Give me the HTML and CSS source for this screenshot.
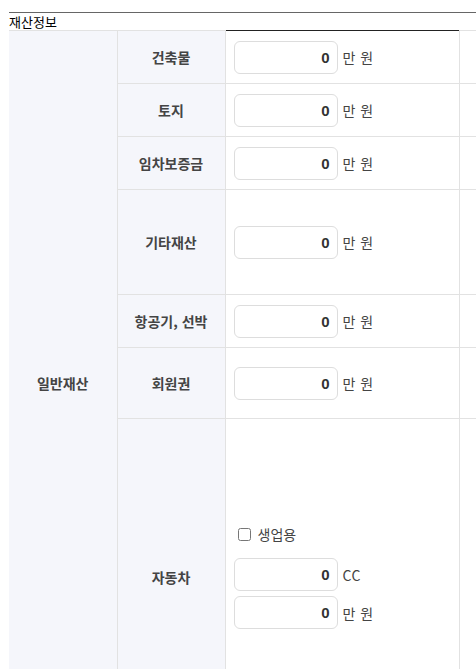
FILE: index.html
```html
<!DOCTYPE html>
<html lang="ko">
<head>
    <meta charset="UTF-8">
    <meta name="viewport" content="width=device-width, initial-scale=1.0">
    <title>재산정보</title>
    <link rel="stylesheet" href="styles.css">
</head>
<body>
    <div class="page">
        <div class="section-title">재산정보</div>
        <table class="asset-table">
            <colgroup>
                <col class="col-group">
                <col class="col-label">
                <col class="col-field">
                <col class="col-extra">
            </colgroup>
            <tbody>
                <tr class="row-base">
                    <th rowspan="7" class="group-head">일반재산</th>
                    <th>건축물</th>
                    <td class="field first">
                        <div class="amount"><input type="text" value="0"><span class="unit">만 원</span></div>
                    </td>
                    <td class="extra first"></td>
                </tr>
                <tr class="row-base">
                    <th>토지</th>
                    <td class="field">
                        <div class="amount"><input type="text" value="0"><span class="unit">만 원</span></div>
                    </td>
                    <td class="extra"></td>
                </tr>
                <tr class="row-base">
                    <th>임차보증금</th>
                    <td class="field">
                        <div class="amount"><input type="text" value="0"><span class="unit">만 원</span></div>
                    </td>
                    <td class="extra"></td>
                </tr>
                <tr class="row-tall">
                    <th>기타재산</th>
                    <td class="field">
                        <div class="amount"><input type="text" value="0"><span class="unit">만 원</span></div>
                    </td>
                    <td class="extra"></td>
                </tr>
                <tr class="row-base">
                    <th>항공기, 선박</th>
                    <td class="field">
                        <div class="amount"><input type="text" value="0"><span class="unit">만 원</span></div>
                    </td>
                    <td class="extra"></td>
                </tr>
                <tr class="row-mid">
                    <th>회원권</th>
                    <td class="field">
                        <div class="amount"><input type="text" value="0"><span class="unit">만 원</span></div>
                    </td>
                    <td class="extra"></td>
                </tr>
                <tr class="row-car">
                    <th>자동차</th>
                    <td class="field">
                        <label class="check"><input type="checkbox"><span>생업용</span></label>
                        <div class="amount"><input type="text" value="0"><span class="unit">CC</span></div>
                        <div class="amount"><input type="text" value="0"><span class="unit">만 원</span></div>
                    </td>
                    <td class="extra"></td>
                </tr>
            </tbody>
        </table>
    </div>
</body>
</html>
```

FILE: styles.css
```css
html, body {
    margin: 0;
    padding: 0;
    overflow: hidden;
}

body {
    font-family: "Noto Sans CJK KR", "Noto Sans", sans-serif;
    color: #333;
    background: #fff;
}

.page {
    padding: 12px 0 0 9px;
    overflow: hidden;
}

.section-title {
    border-top: 1px solid #666;
    font-size: 13px;
    line-height: 17px;
    color: #000;
    width: 600px;
}

.asset-table {
    border-collapse: collapse;
    table-layout: fixed;
    width: 650px;
}

.col-group { width: 108px; }
.col-label { width: 108px; }
.col-field { width: 234px; }
.col-extra { width: 200px; }

.asset-table th,
.asset-table td {
    border: 1px solid #e2e2e2;
    padding: 0;
}

.asset-table th {
    background: #f5f6fb;
    color: #444;
    font-size: 14px;
    font-weight: bold;
    text-align: center;
    vertical-align: middle;
}

.asset-table .group-head {
    border-left: 0;
    vertical-align: top;
    padding-top: 342px;
}

.asset-table td.field {
    padding-left: 8px;
    vertical-align: middle;
}

.asset-table td.first {
    border-top: 1px solid #222;
}

.asset-table td.extra.first {
    border-top: 1px solid #e2e2e2;
}

.row-base { height: 53px; }
.row-tall { height: 105px; }
.row-mid { height: 71px; }
.row-car { height: 316px; }

.amount {
    display: flex;
    align-items: center;
    gap: 5px;
}

.amount + .amount {
    margin-top: 5px;
}

.amount input {
    box-sizing: border-box;
    width: 104px;
    height: 33px;
    border: 1px solid #ddd;
    border-radius: 6px;
    padding: 0 7px;
    text-align: right;
    font-family: "Liberation Sans", sans-serif;
    font-weight: bold;
    font-size: 15px;
    color: #333;
    background: #fff;
}

.unit {
    font-size: 14px;
    letter-spacing: 0.5px;
    color: #444;
}

.check {
    display: flex;
    align-items: center;
    font-size: 14px;
    color: #444;
    margin-bottom: 14px;
}

.check input {
    margin: 3px 7px 3px 4px;
}
```
